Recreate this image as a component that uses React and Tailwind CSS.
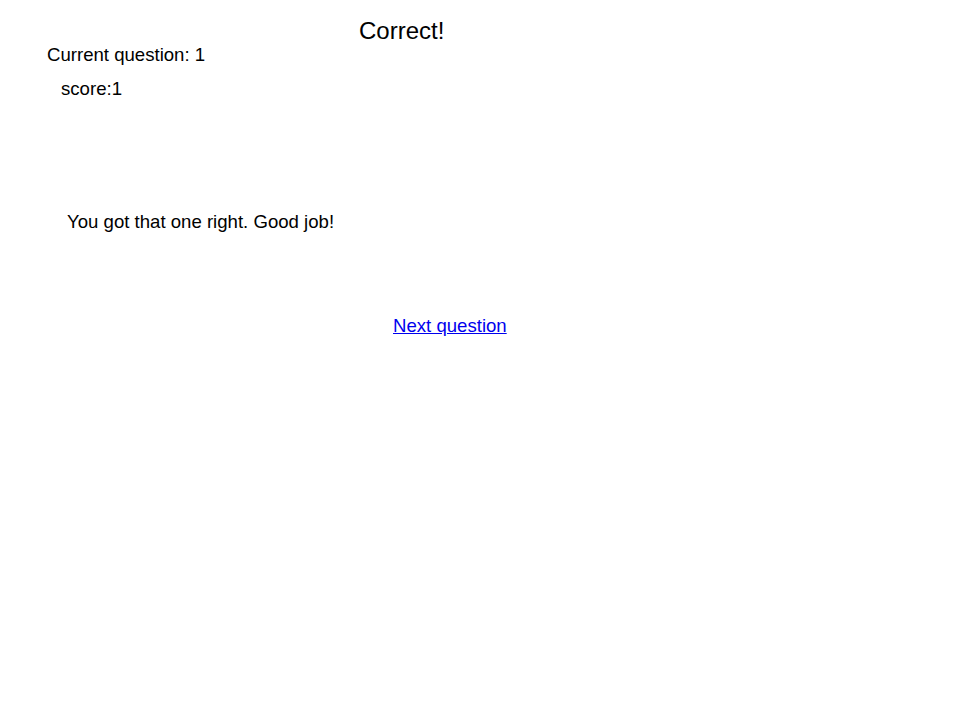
export default function App() {
  return (
    <div className="min-h-screen bg-white text-black font-['Liberation_Sans',Arial,sans-serif]">
      <h2 className="pt-[17px] pl-[359px] text-[24px] leading-[28px]">Correct!</h2>
      <h3 className="-mt-[1px] pl-[47px] text-[18.6px] leading-[22px]">Current question: 1</h3>
      <h3 className="mt-[12px] pl-[61px] text-[18.6px] leading-[22px]">score:1</h3>
      <p className="mt-[111px] pl-[67px] text-[18.6px] leading-[22px]">You got that one right. Good job!</p>
      <div className="mt-[82px] pl-[393px] text-[18.6px] leading-[22px]">
        <a href="#" className="text-[#0000ee] underline">Next question</a>
      </div>
    </div>
  );
}
